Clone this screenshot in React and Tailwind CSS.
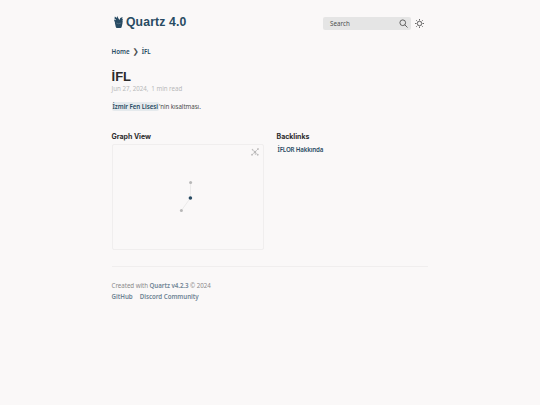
import React from "react";

function PlantIcon() {
  return (
    <svg className="w-[9px] h-3 shrink-0" viewBox="0 0 20 24" fill="#284b63" preserveAspectRatio="none">
      <path d="M2 10h17v4l-2 8q-.5 2-2.500 2h-8q-2 0-2.500-2l-2-8z" />
      <path d="M4 12V7L1 5l1-4 4 3 1-4 3 5 2 3 2-4 5-2-1 5-1 5z" />
      <path d="M0 7l6 2v3l-5-1zM15 7l5-1-2 6z" />
      <path d="M5 14l5 1.500 6-1.500" fill="none" stroke="#7d93a1" strokeWidth="1" />
    </svg>
  );
}

function SearchIcon() {
  return (
    <svg className="size-[9px]" viewBox="0 0 18 18" fill="none" stroke="#5c5c5c" strokeWidth="1.900">
      <circle cx="7.500" cy="7.500" r="5.700" />
      <path d="M11.500 11.500L17 17" />
    </svg>
  );
}

function SunIcon() {
  return (
    <svg className="size-[9px]" viewBox="0 0 18 18" fill="none" stroke="#4e4e4e" strokeWidth="1.700">
      <circle cx="9" cy="9" r="4.400" />
      <path d="M9 0v3M9 15v3M0 9h3M15 9h3M2.600 2.600l2 2M13.400 13.400l2 2M2.600 15.400l2-2M13.400 4.600l2-2" />
    </svg>
  );
}

function GlobalGraphIcon() {
  return (
    <svg className="size-2" viewBox="0 0 16 16" fill="none" stroke="#b8b6b7" strokeWidth="1.300">
      <path d="M3 3.500l5 4.500 6-6M8 8l-6 5.500M8 8l5 5.500M8 8l1 6" />
      <g fill="#b8b8b8">
        <circle cx="3" cy="3.500" r=".9" />
        <circle cx="14" cy="2" r="1.100" />
        <circle cx="8" cy="8" r="1.900" />
        <circle cx="2" cy="13.500" r="1.200" />
        <circle cx="13.500" cy="13.500" r="1.200" />
      </g>
    </svg>
  );
}

function Graph() {
  return (
    <div className="relative mt-[2px] w-[152px] h-[106px] rounded-[2px] border border-[#f0eeee]">
      <svg className="block w-[150px] h-[104px]" viewBox="113 145 150 104">
        <path d="M190.600 182.500L190.400 198L181.400 210.500" fill="none" stroke="#e0e0e0" strokeWidth=".6" />
        <circle cx="190.600" cy="182.500" r="1.500" fill="#b8b8b8" />
        <circle cx="181.400" cy="210.500" r="1.500" fill="#b8b8b8" />
        <circle cx="190.400" cy="198" r="1.800" fill="#284b63" />
      </svg>
      <div className="absolute top-[3px] right-[3.500px]">
        <GlobalGraphIcon />
      </div>
    </div>
  );
}

function App() {
  return (
    <div className="min-h-screen bg-[#faf8f8] pl-[111.600px] font-['Noto_Sans',sans-serif] text-[6.200px] leading-[11px] tracking-[-0.030px] text-[#4e4e4e] antialiased whitespace-nowrap">
      <div className="w-[316px] pt-[15px]">
        <header className="flex items-center h-[14px]">
          <div className="flex items-center gap-[3.400px] pl-[2px]">
            <PlantIcon />
            <h2 className="font-['Liberation_Sans',sans-serif] text-[12.200px] leading-[14px] font-bold tracking-[0.150px] text-[#284b63]">Quartz 4.0</h2>
          </div>
          <div className="ml-auto flex items-center gap-1 pr-[3.600px] pt-[3px]">
            <div className="flex items-center justify-between w-[88px] h-[13px] rounded-[2px] bg-[#e5e5e5] pl-[7px] pr-[3.500px]">
              <span className="tracking-[0.040px]">Search</span>
              <SearchIcon />
            </div>
            <SunIcon />
          </div>
        </header>

        <nav className="mt-4 flex items-center gap-[3px] h-3 font-semibold text-[#284b63]">
          <a>Home</a>
          <span className="font-['DejaVu_Sans',sans-serif] text-[7.500px] font-normal text-[#4e4e4e]">❯</span>
          <a className="tracking-[-0.100px]">İFL</a>
        </nav>

        <h1 className="mt-[13px] h-[13px] font-['Liberation_Sans',sans-serif] text-[13px] leading-[14px] font-bold text-[#2b2b2b]">İFL</h1>
        <p className="h-[11px] text-[#b8b8b8]">
          Jun 27, 2024,<span className="ml-[3px]">1 min read</span>
        </p>
        <p className="mt-[7px] h-[11px] flex items-center tracking-[-0.060px]">
          <a className="h-[9px] rounded-[2px] bg-[#e5eaed] px-[1px] leading-[9px] font-semibold text-[#284b63]">İzmir Fen Lisesi</a>
          <span>'nin kısaltması.</span>
        </p>

        <div className="mt-5 flex">
          <section className="w-[165px]">
            <h3 className="h-[10px] font-['Inter',sans-serif] text-[7px] leading-[10px] font-bold text-[#2b2b2b]">Graph View</h3>
            <Graph />
          </section>
          <section>
            <h3 className="h-[10px] font-['Inter',sans-serif] text-[7px] leading-[10px] font-bold text-[#2b2b2b]">Backlinks</h3>
            <a className="mt-[2px] block pl-[1px] font-semibold tracking-[-0.180px] text-[#284b63]">İFLOR Hakkında</a>
          </section>
        </div>

        <footer className="mt-4 border-t border-[#f0eeee] pt-[13px] text-[#8b8a8b]">
          <p className="h-[11px] tracking-[-0.050px]">
            Created with <a className="font-semibold text-[#6f8494]">Quartz v4.2.3</a> © 2024
          </p>
          <div className="flex gap-[7px] font-semibold text-[#6f8494]">
            <a>GitHub</a>
            <a>Discord Community</a>
          </div>
        </footer>
      </div>
    </div>
  );
}

export default App;
